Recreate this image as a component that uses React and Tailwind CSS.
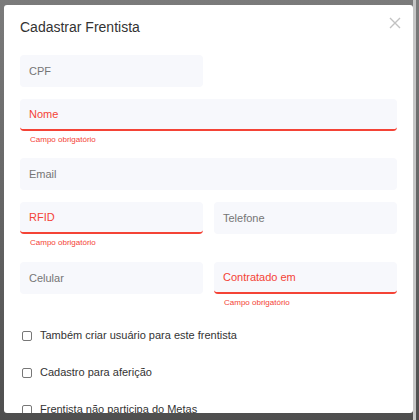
import React from 'react';

const Field = ({ label, error, className = '' }) => (
  <div className={className}>
    <div
      className={`h-[32px] rounded-sm bg-[#f7f8fc] flex items-center pl-[9px] text-[11px] ${
        error ? 'border-b-2 border-[#f44336] text-[#f44336]' : 'text-[#757575]'
      }`}
    >
      {label}
    </div>
    {error && (
      <p className="mt-[2px] pl-[10px] text-[8px] leading-[13px] text-[#f44336]">Campo obrigatório</p>
    )}
  </div>
);

const Check = ({ label }) => (
  <label className="h-[37px] flex items-center">
    <span className="w-[10px] h-[10px] ml-[2px] border border-[#777] rounded-[2px] bg-white" />
    <span className="ml-[8px] text-[11px] text-[#333]">{label}</span>
  </label>
);

export default function App() {
  return (
    <div
      className="w-[419px] h-[420px] flex pl-[4px] pt-[5px] bg-gradient-to-b from-[#7b7b7b] to-[#4f4f4f] overflow-hidden"
      style={{ fontFamily: '"Liberation Sans", Arial, sans-serif' }}
    >
      <div className="w-[409px] h-[408px] bg-white rounded-[3px] overflow-hidden relative shrink-0">
        {/* Header */}
        <div className="px-[16px] pt-[12px] pb-[18px]">
          <h2 className="text-[14px] leading-[20px] text-[#333] font-normal">Cadastrar Frentista</h2>
        </div>
        <button className="absolute top-[12px] right-[12px] text-[#c2c2c2]">
          <svg width="12" height="12" viewBox="0 0 12 12" stroke="currentColor" strokeWidth="1.4">
            <path d="M1 1 L11 11 M11 1 L1 11" />
          </svg>
        </button>

        {/* Form */}
        <div className="px-[16px]">
          <div className="grid grid-cols-2 gap-x-[11px]">
            <Field label="CPF" className="mb-[12px]" />
          </div>
          <Field label="Nome" error className="mb-[12px]" />
          <Field label="Email" className="mb-[12px]" />
          <div className="grid grid-cols-2 gap-x-[11px] mb-[13px]">
            <Field label="RFID" error />
            <Field label="Telefone" />
          </div>
          <div className="grid grid-cols-2 gap-x-[11px]">
            <Field label="Celular" />
            <Field label="Contratado em" error />
          </div>

          <div className="mt-[8px]">
            <Check label="Também criar usuário para este frentista" />
            <Check label="Cadastro para aferição" />
            <Check label="Frentista não participa do Metas" />
          </div>
        </div>
      </div>
      <div className="w-[3px] bg-[#c6c6c6] shrink-0 -mt-[5px] h-[420px]" />
    </div>
  );
}
